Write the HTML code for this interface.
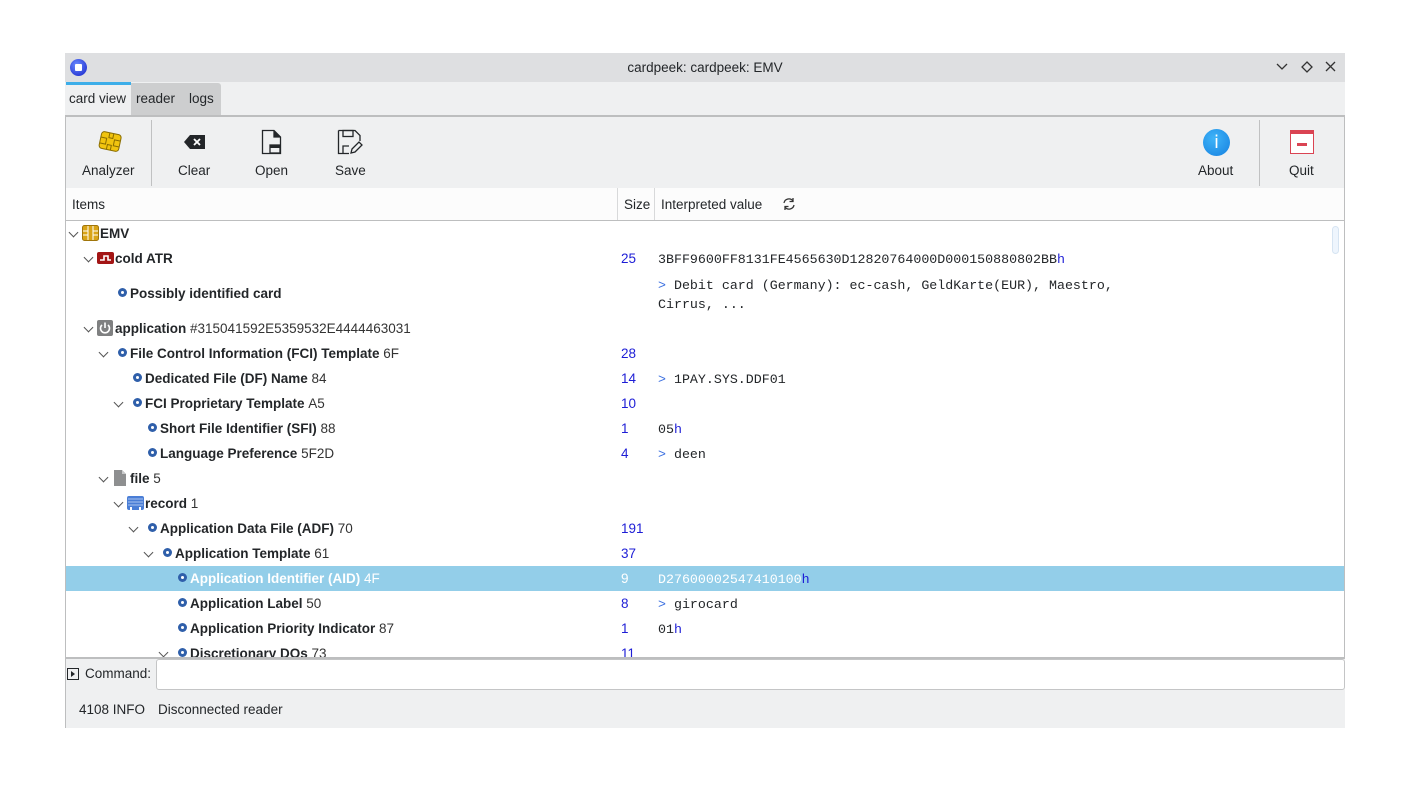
<!DOCTYPE html>
<html><head><meta charset="utf-8"><style>
*{box-sizing:border-box;margin:0;padding:0}
body{width:1410px;height:806px;background:#fff;font-family:"Liberation Sans","DejaVu Sans",sans-serif;font-size:13.5px;color:#232629;position:relative;overflow:hidden}
.a{position:absolute}
.win{left:65px;top:53px;width:1280px;height:675px;background:#eff0f1}
.title{left:65px;top:53px;width:1280px;height:29px;background:#dedfe1}
.row{position:absolute;left:66px;width:1265px;height:25px;line-height:25px;white-space:nowrap}
.row b{font-weight:bold}
.sz{position:absolute;left:555px;color:#1d1dd6}
.val{position:absolute;left:592px;top:1px;font-family:"Liberation Mono",monospace;font-size:13.3px;color:#232629}
.gt{color:#3b6fe0}
.hb{color:#1d1dd6}
.arr{position:absolute;top:8px;width:7px;height:7px;border-right:1.3px solid #555;border-bottom:1.3px solid #555;transform:rotate(45deg)}
.bul{position:absolute;top:7px;width:9px;height:9px;border-radius:50%;background:#2f5faa}
.bul:after{content:"";position:absolute;left:3px;top:3px;width:3px;height:3px;border-radius:50%;background:#fff}
.sfx{color:#333;font-weight:normal}
.tb{position:absolute;top:163px;font-size:13.5px;color:#232629}
</style></head><body>
<div class="a win"></div>
<div class="a title"></div>
<div class="a" style="left:70px;top:59px;width:17px;height:17px;border-radius:50%;background:radial-gradient(circle at 40% 35%,#6b8cff,#1420c8);"></div>
<div class="a" style="left:75px;top:64px;width:7px;height:7px;background:#fff;border-radius:1px"></div>
<div class="a" style="left:0;width:1410px;top:60px;text-align:center;color:#232629">cardpeek: cardpeek: EMV</div>
<svg class="a" style="left:1274px;top:60px" width="64" height="14"><path d="M3 4 L8 9 L13 4" stroke="#333" fill="none" stroke-width="1.3"/><path d="M33 2 L38 7 L33 12 L28 7Z" stroke="#333" fill="none" stroke-width="1.3"/><path d="M52 2 L61 11 M61 2 L52 11" stroke="#333" stroke-width="1.3"/></svg>
<div class="a" style="left:66px;top:82px;width:65px;height:34px;background:#eff0f1;border-top:3px solid #3daee9"></div>
<div class="a" style="left:131px;top:83px;width:90px;height:32px;background:#cdcecf;border-radius:0 3px 0 0"></div>
<div class="a" style="left:69px;top:91px">card view</div>
<div class="a" style="left:136px;top:91px">reader</div>
<div class="a" style="left:189px;top:91px">logs</div>
<div class="a" style="left:65px;top:115px;width:1280px;height:2px;background:#bdbebf"></div>
<div class="a" style="left:65px;top:115px;width:1px;height:613px;background:#bdbebf"></div>
<div class="a" style="left:1344px;top:115px;width:1px;height:543px;background:#bdbebf"></div>
<svg class="a" style="left:97px;top:129px" width="26" height="26"><g transform="rotate(12 13 13)"><rect x="3" y="4" width="20" height="17" rx="3" fill="#f1c40f" stroke="#8a6d00" stroke-width="1"/><path d="M3 10h6v6H3M23 10h-6v6h6M11 4v5h4V4M11 21v-5h4v5" fill="none" stroke="#8a6d00" stroke-width="1"/></g></svg>
<div class="a" style="left:151px;top:120px;width:1px;height:66px;background:#c0c1c2"></div>
<svg class="a" style="left:183px;top:133px" width="24" height="18"><path d="M7 2H22V16H7L1 9Z" fill="#232629"/><path d="M11 6L17 12M17 6L11 12" stroke="#fff" stroke-width="1.8"/></svg>
<svg class="a" style="left:261px;top:129px" width="22" height="26"><path d="M1.5 1.5H13L19.5 8V24.5H1.5Z M13 1.5V8H19.5" fill="none" stroke="#232629" stroke-width="1.3"/><rect x="9" y="16" width="10" height="8" fill="none" stroke="#232629" stroke-width="1.3"/><rect x="9" y="16" width="10" height="3" fill="#232629"/><path d="M13 1.5V8H19.5Z" fill="#232629"/></svg>
<svg class="a" style="left:337px;top:129px" width="26" height="26"><path d="M1.5 1.5H18L23 6.5V12 M1.5 1.5V24.5H12" fill="none" stroke="#232629" stroke-width="1.3"/><rect x="6" y="1.5" width="10" height="6" fill="none" stroke="#232629" stroke-width="1.3"/><path d="M6 24.5V17H12" fill="none" stroke="#232629" stroke-width="1.3"/><path d="M14 24L15 20L22 13L25 16L18 23Z" fill="none" stroke="#232629" stroke-width="1.3"/></svg>
<div class="tb" style="left:82px">Analyzer</div>
<div class="tb" style="left:178px">Clear</div>
<div class="tb" style="left:255px">Open</div>
<div class="tb" style="left:335px">Save</div>
<div class="a" style="left:1203px;top:129px;width:27px;height:27px;border-radius:50%;background:radial-gradient(circle at 40% 35%,#3fb4f8,#1580e0)"></div>
<div class="a" style="left:1203px;top:129px;width:27px;line-height:27px;text-align:center;color:#fff;font-size:18px;font-family:'DejaVu Sans',sans-serif">i</div>
<div class="a" style="left:1259px;top:120px;width:1px;height:66px;background:#c0c1c2"></div>
<div class="a" style="left:1290px;top:130px;width:24px;height:24px;border:1.5px solid #da4453;border-top:4px solid #da4453;background:#fff"></div>
<div class="a" style="left:1297px;top:143px;width:10px;height:3px;background:#da4453"></div>
<div class="tb" style="left:1198px">About</div>
<div class="tb" style="left:1289px">Quit</div>
<div class="a" style="left:66px;top:188px;width:1278px;height:33px;background:#fcfcfc;border-bottom:1px solid #bdbebf"></div>
<div class="a" style="left:617px;top:188px;width:1px;height:32px;background:#d8d9da"></div>
<div class="a" style="left:654px;top:188px;width:1px;height:32px;background:#d8d9da"></div>
<div class="a" style="left:72px;top:197px">Items</div>
<div class="a" style="left:624px;top:197px">Size</div>
<div class="a" style="left:661px;top:197px">Interpreted value</div>
<svg class="a" style="left:781px;top:196px" width="16" height="16"><path d="M3 7A5 5 0 0 1 12 5M13 9A5 5 0 0 1 4 11" fill="none" stroke="#333" stroke-width="1.3"/><path d="M12 2V5.5H8.5M4 14V10.5H7.5" fill="none" stroke="#333" stroke-width="1.3"/></svg>
<div class="a" style="left:66px;top:221px;width:1278px;height:436px;background:#fff;overflow:hidden">
<div class="a" style="left:1266px;top:5px;width:7px;height:28px;border:1px solid #d6e4f2;border-radius:4px;background:#eef5fd"></div>
<div style="position:absolute;left:-66px;top:-221px;width:1344px;height:657px">
<div class="row" style="top:221px"><i class="arr" style="left:4px"></i>
<svg class="a" style="left:16px;top:4px" width="17" height="16"><rect x="0.5" y="0.5" width="16" height="15" rx="2" fill="#d9a418" stroke="#a0750a"/><path d="M6 1V15M11 1V15M1 6H6M1 10H6M11 6H16M11 10H16" stroke="#fff" stroke-width="1"/></svg>
<b class="a" style="left:34px">EMV</b></div>
<div class="row" style="top:246px"><i class="arr" style="left:19px"></i>
<svg class="a" style="left:31px;top:6px" width="17" height="12"><rect width="17" height="12" rx="2" fill="#a31515"/><path d="M3 8H7V4H11V8H14" stroke="#fff" stroke-width="1.6" fill="none"/></svg>
<b class="a" style="left:49px">cold ATR</b><span class="sz">25</span><span class="val">3BFF9600FF8131FE4565630D12820764000D000150880802BB<span class="hb">h</span></span></div>
<div class="row" style="top:281px"><i class="bul" style="left:52px"></i><b class="a" style="left:64px">Possibly identified card</b></div>
<div class="a val" style="left:658px;top:276px;line-height:19px"><span class="gt">&gt;</span> Debit card (Germany): ec-cash, GeldKarte(EUR), Maestro,<br>Cirrus, ...</div>
<div class="row" style="top:316px"><i class="arr" style="left:19px"></i>
<svg class="a" style="left:31px;top:4px" width="16" height="16"><rect width="16" height="16" rx="2" fill="#7f8081"/><path d="M5 5A4.5 4.5 0 1 0 11 5" stroke="#fff" stroke-width="1.6" fill="none"/><path d="M8 2.5V8" stroke="#fff" stroke-width="1.6"/></svg>
<b class="a" style="left:49px">application <span class="sfx">#315041592E5359532E4444463031</span></b></div>
<div class="row" style="top:341px"><i class="arr" style="left:34px"></i><i class="bul" style="left:52px"></i><b class="a" style="left:64px">File Control Information (FCI) Template <span class="sfx">6F</span></b><span class="sz">28</span></div>
<div class="row" style="top:366px"><i class="bul" style="left:67px"></i><b class="a" style="left:79px">Dedicated File (DF) Name <span class="sfx">84</span></b><span class="sz">14</span><span class="val"><span class="gt">&gt;</span> 1PAY.SYS.DDF01</span></div>
<div class="row" style="top:391px"><i class="arr" style="left:49px"></i><i class="bul" style="left:67px"></i><b class="a" style="left:79px">FCI Proprietary Template <span class="sfx">A5</span></b><span class="sz">10</span></div>
<div class="row" style="top:416px"><i class="bul" style="left:82px"></i><b class="a" style="left:94px">Short File Identifier (SFI) <span class="sfx">88</span></b><span class="sz">1</span><span class="val">05<span class="hb">h</span></span></div>
<div class="row" style="top:441px"><i class="bul" style="left:82px"></i><b class="a" style="left:94px">Language Preference <span class="sfx">5F2D</span></b><span class="sz">4</span><span class="val"><span class="gt">&gt;</span> deen</span></div>
<div class="row" style="top:466px"><i class="arr" style="left:34px"></i>
<svg class="a" style="left:48px;top:4px" width="12" height="16"><path d="M0 0H8L12 4V16H0Z" fill="#8e8f90"/><path d="M8 0V4H12" fill="#c8c9ca"/></svg>
<b class="a" style="left:64px">file <span class="sfx">5</span></b></div>
<div class="row" style="top:491px"><i class="arr" style="left:49px"></i>
<svg class="a" style="left:61px;top:5px" width="17" height="14"><rect width="17" height="14" rx="2" fill="#4a7ed6"/><path d="M1 3H16M1 6H16M1 9H16" stroke="#a9c4f0" stroke-width="1"/><rect x="3" y="11" width="2" height="3" fill="#fff"/><rect x="12" y="11" width="2" height="3" fill="#fff"/></svg>
<b class="a" style="left:79px">record <span class="sfx">1</span></b></div>
<div class="row" style="top:516px"><i class="arr" style="left:64px"></i><i class="bul" style="left:82px"></i><b class="a" style="left:94px">Application Data File (ADF) <span class="sfx">70</span></b><span class="sz">191</span></div>
<div class="row" style="top:541px"><i class="arr" style="left:79px"></i><i class="bul" style="left:97px"></i><b class="a" style="left:109px">Application Template <span class="sfx">61</span></b><span class="sz">37</span></div>
<div class="row" style="top:566px;background:#93cee9;left:66px;width:1278px"><i class="bul" style="left:112px"></i><b class="a" style="left:124px;color:#fff">Application Identifier (AID) <span class="sfx" style="color:#fff">4F</span></b><span class="sz" style="color:#fff">9</span><span class="val" style="color:#fff">D27600002547410100<span class="hb">h</span></span></div>
<div class="row" style="top:591px"><i class="bul" style="left:112px"></i><b class="a" style="left:124px">Application Label <span class="sfx">50</span></b><span class="sz">8</span><span class="val"><span class="gt">&gt;</span> girocard</span></div>
<div class="row" style="top:616px"><i class="bul" style="left:112px"></i><b class="a" style="left:124px">Application Priority Indicator <span class="sfx">87</span></b><span class="sz">1</span><span class="val">01<span class="hb">h</span></span></div>
<div class="row" style="top:632px;height:25px;overflow:hidden"><div style="position:absolute;left:0;top:9px;width:1265px;height:25px"><i class="arr" style="left:94px"></i><i class="bul" style="left:112px"></i><b class="a" style="left:124px">Discretionary DOs <span class="sfx">73</span></b><span class="sz">11</span></div></div>
</div></div>
<div class="a" style="left:65px;top:657px;width:1280px;height:2px;background:#bdbebf"></div>
<svg class="a" style="left:67px;top:668px" width="12" height="12"><rect x="0.5" y="0.5" width="11" height="11" fill="none" stroke="#232629"/><path d="M4 3L8 6L4 9Z" fill="#232629"/></svg>
<div class="a" style="left:85px;top:666px">Command:</div>
<div class="a" style="left:156px;top:659px;width:1189px;height:31px;background:#fff;border:1px solid #c4c5c6;border-radius:3px"></div>
<div class="a" style="left:79px;top:702px">4108 INFO</div>
<div class="a" style="left:158px;top:702px">Disconnected reader</div>
</body></html>
